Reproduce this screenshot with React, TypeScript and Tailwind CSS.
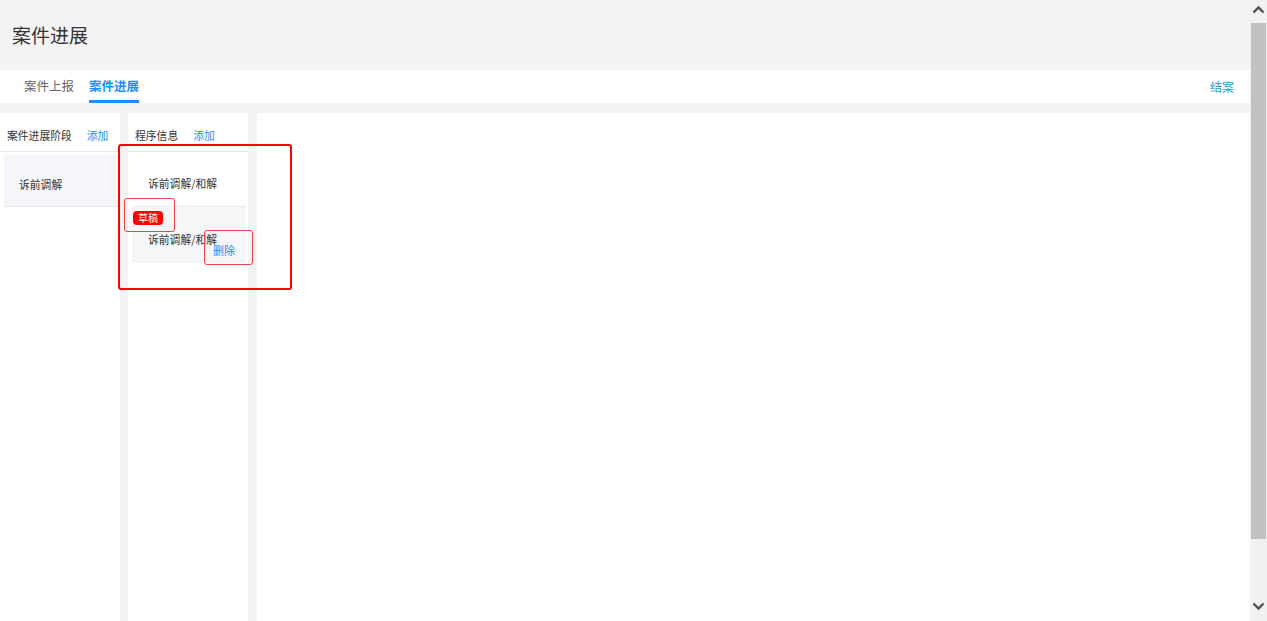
import React from 'react';

// Fake browser scrollbar on the right edge
const Scrollbar = () => (
  <div className="flex w-[17px] shrink-0 flex-col bg-[#f1f1f1]">
    <div className="flex h-[23px] items-center justify-center pb-[4px]">
      <svg width="13" height="9" viewBox="0 0 13 9">
        <path d="M1.5 7.5 L6.5 2.5 L11.5 7.5" fill="none" stroke="#505050" strokeWidth="2.4" />
      </svg>
    </div>
    <div className="ml-[1px] h-[516px] w-[15px] bg-[#c1c1c1]" />
    <div className="flex-1" />
    <div className="flex h-[24px] items-center justify-center pb-[6px]">
      <svg width="13" height="9" viewBox="0 0 13 9">
        <path d="M1.5 1.5 L6.5 6.5 L11.5 1.5" fill="none" stroke="#505050" strokeWidth="2.4" />
      </svg>
    </div>
  </div>
);

const PanelHeader = ({ title }: { title: string }) => (
  <div className="flex h-[39px] items-center gap-[15px] border-b border-[#e8e8e8] pl-[7px] pt-[7px] text-[10.8px] text-[#333]">
    <span>{title}</span>
    <span className="text-[#1890ff]">添加</span>
  </div>
);

export default function App() {
  return (
    <div className="relative flex h-[621px] w-full overflow-hidden bg-[#f3f3f3] font-['Noto_Sans_CJK_SC',sans-serif] text-[#333]">
      <div className="flex min-w-0 flex-1 flex-col">
        {/* Page title */}
        <header className="flex h-[70px] items-center pl-[12px] text-[19px] text-[#333]">案件进展</header>

        {/* Tabs */}
        <nav className="flex h-[33px] items-stretch justify-between bg-white pl-[24px] pr-[16px] text-[12.5px]">
          <div className="flex items-stretch gap-[15px]">
            <div className="flex items-center border-b-[3px] border-transparent pt-[3px] text-[#666]">案件上报</div>
            <div className="flex items-center border-b-[3px] border-[#1890ff] pt-[3px] font-bold text-[#1890ff]">案件进展</div>
          </div>
          <div className="flex items-center text-[12px] text-[#1ea3d8]">结案</div>
        </nav>

        {/* Panels */}
        <div className="mt-[10px] flex flex-1">
          <section className="w-[120px] bg-white">
            <PanelHeader title="案件进展阶段" />
            <div className="pl-[4px] pt-[3px]">
              <div className="flex h-[52px] items-center border-b border-[#e8e8e8] bg-[#f5f6f9] pl-[15px] pt-[7px] text-[10.8px]">
                诉前调解
              </div>
            </div>
          </section>

          <section className="ml-[8px] w-[120px] bg-white">
            <PanelHeader title="程序信息" />
            <div className="pl-[4px] pr-[2px] text-[10.8px]">
              <div className="flex h-[55px] items-center border-b border-[#ebebeb] pl-[16px] pt-[8px]">诉前调解/和解</div>
              <div className="relative h-[55px] border-b border-[#ebebeb] bg-[#f5f6f8] pl-[16px] pt-[24px]">
                <span className="absolute left-[1px] top-[4px] rounded-[4px] bg-[#f00] px-[5px] text-[10px] leading-[14px] text-white">
                  草稿
                </span>
                <div>诉前调解/和解</div>
                <span className="absolute right-[11px] top-[36px] text-[11px] leading-[14px] text-[#1890ff]">删除</span>
              </div>
            </div>
          </section>

          <section className="ml-[9px] flex-1 bg-white" />
        </div>
      </div>

      <Scrollbar />

      {/* Red annotation boxes laid over the screenshot */}
      <div className="pointer-events-none absolute left-[118px] top-[144px] h-[146px] w-[174px] rounded-[3px] border-2 border-[#ff0000]" />
      <div className="pointer-events-none absolute left-[124px] top-[198px] h-[34px] w-[51px] rounded-[3px] border border-[#ee4444]" />
      <div className="pointer-events-none absolute left-[204px] top-[230px] h-[35px] w-[49px] rounded-[3px] border border-[#ee4444]" />
    </div>
  );
}
